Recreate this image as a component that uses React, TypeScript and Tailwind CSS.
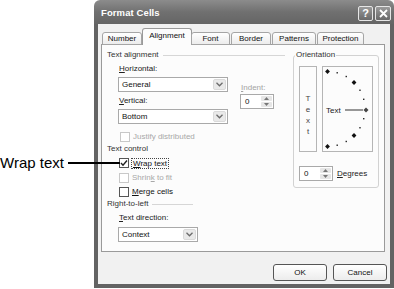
import React from "react";

const F = { fontFamily: '"Liberation Sans", Arial, sans-serif' };

function Chevron() {
  return (
    <svg width="7" height="5" viewBox="0 0 7 5">
      <path d="M0.5 0.8 L3.5 3.8 L6.5 0.8" fill="none" stroke="#6b6b6b" strokeWidth="1.3" />
    </svg>
  );
}

function Select({ value, w }: { value: string; w: string }) {
  return (
    <div className={`${w} h-[15px] border border-[#a9a9a9] bg-white flex items-stretch`}>
      <div className="flex-1 pl-[3px] text-[8px] leading-[13px] text-[#111]">{value}</div>
      <div className="w-[13px] m-[1px] rounded-[2px] bg-[#e9e9e9] border border-[#dadada] flex items-center justify-center">
        <Chevron />
      </div>
    </div>
  );
}

function Spinner({ w = "w-[34px]" }: { w?: string }) {
  return (
    <div className={`${w} h-[15px] border border-[#a9a9a9] bg-white flex items-stretch`}>
      <div className="flex-1 pl-[4px] text-[8px] leading-[13px] text-[#111]">0</div>
      <div className="w-[11px] m-[1px] flex flex-col gap-px">
        <div className="flex-1 bg-[#e6e6e6] rounded-[1px] flex items-center justify-center">
          <svg width="5" height="3" viewBox="0 0 5 3"><path d="M0 3 L2.5 0 L5 3Z" fill="#777" /></svg>
        </div>
        <div className="flex-1 bg-[#e6e6e6] rounded-[1px] flex items-center justify-center">
          <svg width="5" height="3" viewBox="0 0 5 3"><path d="M0 0 L2.5 3 L5 0Z" fill="#777" /></svg>
        </div>
      </div>
    </div>
  );
}

function Check({ checked, disabled }: { checked?: boolean; disabled?: boolean }) {
  return (
    <div
      className={`w-[10px] h-[10px] border bg-white flex items-center justify-center ${
        disabled ? "border-[#c8c8c8]" : "border-[#555]"
      }`}
    >
      {checked && (
        <svg width="8" height="8" viewBox="0 0 8 8">
          <path d="M1 4 L3 6.2 L7 1.5" fill="none" stroke="#222" strokeWidth="1.4" />
        </svg>
      )}
    </div>
  );
}

function GroupHead({ label, line }: { label: string; line?: string }) {
  return (
    <div className="h-[10px] flex items-center gap-[4px]">
      <span className="text-[8px] leading-[10px] text-[#333]">{label}</span>
      {line && <div className={`${line} h-px bg-[#d6d6d6]`} />}
    </div>
  );
}

function Dial() {
  const cx = 4.5;
  const cy = 42;
  const r = 37.5;
  const dots = [];
  for (let k = -6; k <= 6; k++) {
    const a = (k * 15 * Math.PI) / 180;
    const x = cx + r * Math.cos(a);
    const y = cy - r * Math.sin(a);
    const big = k % 3 === 0;
    if (k === 0) continue;
    dots.push(
      big ? (
        <path key={k} d={`M${x} ${y - 2.4} L${x + 2.4} ${y} L${x} ${y + 2.4} L${x - 2.4} ${y}Z`} fill="#111" />
      ) : (
        <rect key={k} x={x - 0.7} y={y - 0.7} width="1.4" height="1.4" fill="#222" />
      )
    );
  }
  return (
    <svg width="49" height="84" viewBox="0 0 49 84">
      {dots}
      <text x="3" y="45.5" fontSize="8" fill="#222" style={F}>
        Text
      </text>
      <line x1="22" y1="43" x2="40" y2="43" stroke="#333" strokeWidth="1" />
      <path d={`M43 40.5 L45.5 43 L43 45.5 L40.5 43Z`} fill="#444" />
    </svg>
  );
}

export default function App() {
  return (
    <div className="relative w-[394px] h-[289px] bg-white overflow-hidden" style={F}>
      {/* annotation */}
      <div className="absolute left-0 top-[154px] text-[15px] leading-[18px] text-black">Wrap text</div>
      <div className="absolute left-[68px] top-[162px] w-[52px] h-[1.5px] bg-black" />

      <div className="ml-[94px] w-[300px] h-[288px] flex flex-col">
        {/* title bar */}
        <div className="h-[24px] rounded-t-[6px] bg-gradient-to-b from-[#8c8c8c] via-[#707070] to-[#656565] flex items-center pl-[7px] pr-[3px] pt-[2px]">
          <span className="text-[9.5px] font-bold text-white flex-1 tracking-[0.1px]">Format Cells</span>
          <div className="flex gap-[2px]">
            <div className="w-[15px] h-[15px] rounded-[2px] border border-[#e6e6e6] bg-gradient-to-b from-[#9a9a9a] to-[#6a6a6a] flex items-center justify-center text-white text-[11px] font-bold leading-none">
              ?
            </div>
            <div className="w-[16px] h-[15px] rounded-[2px] border border-[#e6e6e6] bg-gradient-to-b from-[#9a9a9a] to-[#6a6a6a] flex items-center justify-center">
              <svg width="9" height="9" viewBox="0 0 9 9">
                <path d="M1 1 L8 8 M8 1 L1 8" stroke="#fff" strokeWidth="1.8" />
              </svg>
            </div>
          </div>
        </div>

        {/* body */}
        <div className="flex-1 border-x-[4px] border-b-[4px] border-[#636363] bg-[#f1f1f1] flex flex-col">
          {/* tabs */}
          <div className="relative z-10 flex items-end ml-[4px] mt-[4px] -mb-px h-[17px]">
            {[
              ["Number", "w-[40px]"],
              ["Alignment", "w-[50px]"],
              ["Font", "w-[39px]"],
              ["Border", "w-[40px]"],
              ["Patterns", "w-[44px]"],
              ["Protection", "w-[47px]"],
            ].map(([t, w]) =>
              t === "Alignment" ? (
                <div
                  key={t}
                  className={`${w} h-[17px] border border-b-0 border-[#9a9a9a] rounded-t-[3px] bg-[#fcfcfc] flex items-start justify-center pt-[2px] text-[8px] leading-[10px] text-[#111] -mx-px`}
                >
                  {t}
                </div>
              ) : (
                <div
                  key={t}
                  className={`${w} h-[13px] border border-[#a5a5a5] rounded-t-[3px] bg-gradient-to-b from-[#ffffff] to-[#ececec] flex items-center justify-center text-[8px] leading-[10px] text-[#111] mr-px`}
                >
                  {t}
                </div>
              )
            )}
          </div>

          {/* panel */}
          <div className="ml-[3px] mr-[5px] h-[208px] border border-[#9a9a9a] bg-[#fcfcfc] flex pl-[5px] pt-[5px]">
            {/* left column */}
            <div className="w-[178px] flex flex-col">
              <GroupHead label="Text alignment" line="flex-1" />
              <div className="flex">
                <div className="w-[123px] flex flex-col">
                  <div className="mt-[4px] pl-[12px] text-[8px] leading-[10px] text-[#222]">
                    <u>H</u>orizontal:
                  </div>
                  <div className="mt-[3px] ml-[11px]">
                    <Select value="General" w="w-[110px]" />
                  </div>
                  <div className="mt-[4px] pl-[12px] text-[8px] leading-[10px] text-[#222]">
                    <u>V</u>ertical:
                  </div>
                  <div className="mt-[3px] ml-[11px]">
                    <Select value="Bottom" w="w-[110px]" />
                  </div>
                </div>
                <div className="ml-[11px] flex flex-col">
                  <div className="mt-[23px] text-[8px] leading-[10px] text-[#a3a3a3]">
                    <u>I</u>ndent:
                  </div>
                  <div className="mt-px -ml-px">
                    <Spinner />
                  </div>
                </div>
              </div>
              <div className="mt-[8px] pl-[13px] h-[10px] flex items-center gap-[3px]">
                <Check disabled />
                <span className="text-[8px] leading-[10px] text-[#a8a8a8]">Justify distributed</span>
              </div>
              <div className="mt-[2px]">
                <GroupHead label="Text control" />
              </div>
              <div className="mt-[4px] pl-[12px] h-[10px] flex items-center gap-[2px]">
                <Check checked />
                <span className="text-[8px] leading-[9px] text-[#111] border border-dotted border-[#444] px-px">
                  <u>W</u>rap text
                </span>
              </div>
              <div className="mt-[5px] pl-[12px] h-[10px] flex items-center gap-[3px]">
                <Check disabled />
                <span className="text-[8px] leading-[10px] text-[#a8a8a8]">
                  Shrin<u>k</u> to fit
                </span>
              </div>
              <div className="mt-[4px] pl-[12px] h-[10px] flex items-center gap-[3px]">
                <Check />
                <span className="text-[8px] leading-[10px] text-[#111]">
                  <u>M</u>erge cells
                </span>
              </div>
              <div className="mt-[2px]">
                <GroupHead label="Right-to-left" line="w-[41px]" />
              </div>
              <div className="mt-[4px] pl-[12px] text-[8px] leading-[10px] text-[#222]">
                <u>T</u>ext direction:
              </div>
              <div className="mt-[4px] ml-[11px]">
                <Select value="Context" w="w-[80px]" />
              </div>
            </div>

            {/* orientation */}
            <fieldset className="ml-[8px] w-[86px] h-[138px] border border-[#d2d2d2] rounded-[3px] px-[5px] pb-[6px]">
              <legend className="ml-[-4px] px-[1px] text-[8px] leading-[10px] text-[#333]">Orientation</legend>
              <div className="mt-[6px] flex gap-[5px]">
                <div className="w-[18px] h-[86px] border border-[#b5b5b5] flex flex-col items-center pt-[26px] text-[8px] leading-[11px] text-[#444]">
                  <span>T</span>
                  <span>e</span>
                  <span>x</span>
                  <span>t</span>
                </div>
                <div className="w-[51px] h-[86px] border border-[#b5b5b5]">
                  <Dial />
                </div>
              </div>
              <div className="mt-[14px] flex items-center gap-[4px]">
                <Spinner />
                <span className="text-[8px] leading-[10px] text-[#222]">
                  <u>D</u>egrees
                </span>
              </div>
            </fieldset>
          </div>

          {/* buttons */}
          <div className="mt-[12px] mr-[3px] flex justify-end gap-[6px]">
            <div className="w-[54px] h-[17px] border border-[#555] rounded-[3px] bg-gradient-to-b from-white to-[#ececec] flex items-center justify-center text-[8px] text-[#111]">
              OK
            </div>
            <div className="w-[54px] h-[17px] border border-[#555] rounded-[3px] bg-gradient-to-b from-white to-[#ececec] flex items-center justify-center text-[8px] text-[#111]">
              Cancel
            </div>
          </div>
        </div>
      </div>
    </div>
  );
}
